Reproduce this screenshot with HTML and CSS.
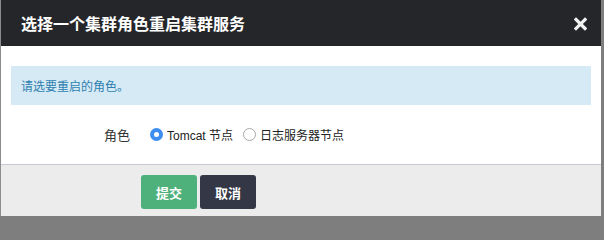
FILE: index.html
```html
<!DOCTYPE html>
<html lang="zh-CN">
<head>
<meta charset="utf-8">
<title>选择一个集群角色重启集群服务</title>
<link rel="stylesheet" href="styles.css">
</head>
<body>
<div class="modal">
  <div class="modal-header">
    <h3 class="modal-title">选择一个集群角色重启集群服务</h3>
    <span class="close" aria-label="关闭">
      <svg width="13" height="14" viewBox="0 0 13 14"><path d="M2 2.5 L11 11.5 M11 2.5 L2 11.5" stroke="#f2f2f2" stroke-width="3.2" stroke-linecap="square"/></svg>
    </span>
  </div>
  <div class="modal-body">
    <div class="alert">请选要重启的角色。</div>
    <div class="form-row">
      <label class="form-label">角色</label>
      <div class="options">
        <label class="radio"><span class="radio-dot checked"></span>Tomcat 节点</label>
        <label class="radio"><span class="radio-dot"></span>日志服务器节点</label>
      </div>
    </div>
  </div>
  <div class="modal-footer">
    <button class="btn btn-submit">提交</button>
    <button class="btn btn-cancel">取消</button>
  </div>
</div>
</body>
</html>
```
FILE: styles.css
```css
html, body {
  margin: 0;
  padding: 0;
}
body {
  background: #7e7e7e;
  font-family: "Liberation Sans", "Noto Sans CJK SC", sans-serif;
  width: 604px;
  height: 216px;
  overflow: hidden;
}
.modal {
  width: 600px;
  border-left: 1px solid #8c8c8c;
  background: #fff;
  height: 216px;
  display: flex;
  flex-direction: column;
}
.modal-header {
  height: 46px;
  background: #252629;
  display: flex;
  align-items: center;
  justify-content: space-between;
  padding: 0 14px 0 20px;
}
.modal-title {
  margin: 0;
  color: #fff;
  font-size: 16px;
  font-weight: bold;
  line-height: 20px;
  font-family: "Noto Sans CJK SC", sans-serif;
}
.close {
  display: flex;
  width: 13px;
  height: 14px;
  margin-top: 1px;
}
.modal-body {
  padding: 20px 10px 15px;
}
.alert {
  height: 39px;
  background: #d6eaf6;
  color: #2f7fae;
  font-size: 12px;
  line-height: 39px;
  padding-left: 10px;
  font-family: "Noto Sans CJK SC", sans-serif;
}
.form-row {
  margin-top: 14px;
  height: 30px;
  display: flex;
  align-items: center;
}
.form-label {
  width: 119px;
  text-align: right;
  font-size: 13px;
  color: #333;
  font-family: "Noto Sans CJK SC", sans-serif;
  padding-right: 20px;
}
.options {
  display: flex;
  align-items: center;
  gap: 10px;
}
.radio {
  display: flex;
  align-items: center;
  font-size: 12px;
  color: #222;
}
.radio-dot {
  box-sizing: border-box;
  width: 13px;
  height: 13px;
  border-radius: 50%;
  border: 1px solid #a8a8a8;
  background: #fff;
  margin-right: 4px;
}
.radio-dot.checked {
  border: 4px solid #3d8ef0;
  background: #fff;
}
.modal-footer {
  flex: 1;
  background: #ececec;
  border-top: 1px solid #ccc8da;
  padding: 10px 0 0 140px;
  display: flex;
  align-items: flex-start;
  gap: 3px;
}
.btn {
  width: 56px;
  height: 34px;
  border: none;
  border-radius: 3px;
  color: #fff;
  font-size: 13px;
  font-weight: bold;
  font-family: "Noto Sans CJK SC", sans-serif;
  padding: 0;
}
.btn-submit {
  background: #4eb07b;
}
.btn-cancel {
  background: #343746;
}
```
